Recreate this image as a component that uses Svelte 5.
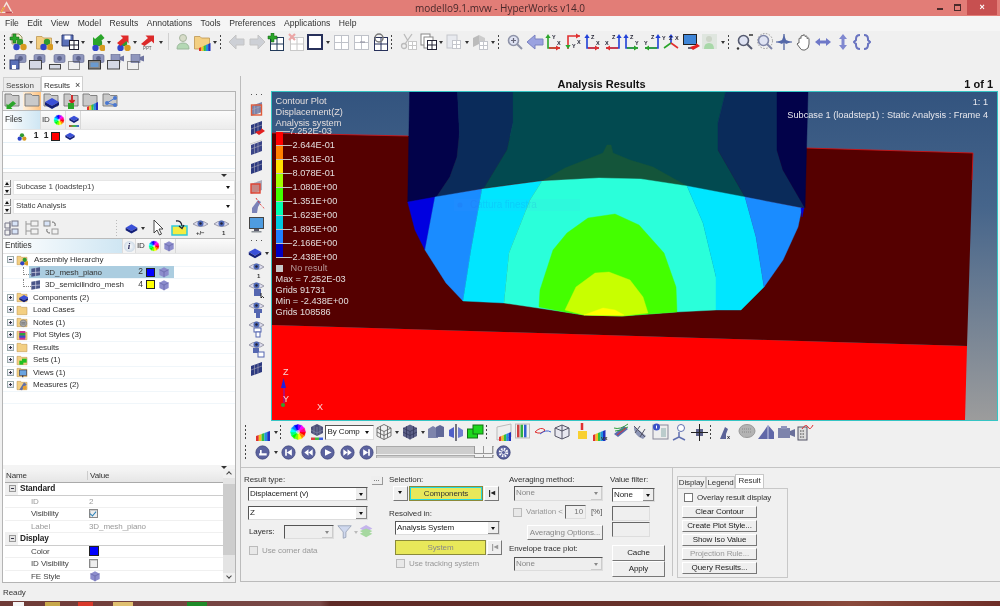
<script>
	const trio = (x = 0, y = 0) =>
		`<g transform="translate(${x} ${y})"><circle cx="9" cy="8" r="3.2" fill="#2f9a2f"/><circle cx="5.5" cy="13" r="3.2" fill="#2f45c8"/><circle cx="12.5" cy="13" r="3.2" fill="#d89a20"/></g>`;
	const cube = (x = 0, y = 0, c = "#3a50d8", d = "#131f78") =>
		`<g transform="translate(${x} ${y})"><path d="M9 4l7 4-7 4-7-4z" fill="${c}"/><path d="M2 8v3l7 4 7-4V8l-7 4z" fill="${d}"/></g>`;
	const folder = `<path d="M1.5 3.5h5.5l1.5 1.5h8v11h-15z" fill="#f3cf82" stroke="#bd9550" stroke-width=".8"/>`;
	const gfolder = `<path d="M2 2h6l1.5 1.5H16V14H2z" fill="#c9c9c9" stroke="#777" stroke-width=".9"/>`;
	const pane = (x, y, s = 9, c = "#223") =>
		`<g transform="translate(${x} ${y})" fill="none" stroke="${c}"><rect x=".5" y=".5" width="${s}" height="${s}" fill="#fff"/><path d="M${s / 2 + 0.5} .5V${s + 0.5}M.5 ${s / 2 + 0.5}H${s + 0.5}"/></g>`;
	const plus = (x, y, c = "#2aa52a") =>
		`<path transform="translate(${x} ${y})" d="M3 0h3v3h3v3H6v3H3V6H0V3h3z" fill="${c}" stroke="#175c17" stroke-width=".5"/>`;
	const rainbow = (x = 0, y = 0, w = 3) =>
		`<g transform="translate(${x} ${y})">` +
		["#e03030", "#f0c020", "#30c040", "#2090e0", "#2030c0"]
			.map((c, i) => `<path d="M${i * w} ${12 - i} l${w} -1 v11 l-${w} 1z" fill="${c}"/>`)
			.join("") +
		`</g>`;
	const wheel = () => {
		let s = "";
		for (let a = 0; a < 12; a++) {
			const p = (k) => `${9 + 7.5 * Math.cos((k * Math.PI) / 6)} ${9 + 7.5 * Math.sin((k * Math.PI) / 6)}`;
			s += `<path d="M9 9L${p(a)}L${p(a + 1)}z" fill="hsl(${a * 30} 100% 50%)" stroke="hsl(${a * 30} 100% 50%)" stroke-width=".4"/>`;
		}
		return s + `<circle cx="9" cy="9" r="2" fill="#fff" opacity=".6"/>`;
	};
	const axes = (a, b, ca, cb, flip) => {
		const x0 = flip ? 15 : 3;
		const x1 = flip ? 2 : 15;
		return `<path d="M${x0} 3V15H${x1}" fill="none" stroke="${ca}" stroke-width="1.6"/><path d="M${x0} 1l2.6 4h-5.2z" fill="${ca}"/><path d="M${x1} 15l${flip ? 4 : -4} -2.6v5.2z" fill="${cb}"/><path d="M${flip ? 14 : 4} 15H${x1}" stroke="${cb}" stroke-width="1.6"/><text x="${flip ? 8 : 7}" y="6" class="ax">${a}</text><text x="${flip ? 1 : 12}" y="12" class="ax">${b}</text>`;
	};
	const cam = (body) =>
		`<rect x="6" y="1.5" width="11" height="8" rx="1.5" fill="#8f96bd" stroke="#5d638c" stroke-width=".6"/><circle cx="11.5" cy="5.5" r="2.4" fill="#5d638c"/>${body}`;
	const mesh = (extra = "", c = "#2d3a80") =>
		`<path d="M3 7l11-4v10l-11 4z" fill="${c}"/><path d="M6.5 5.8v10M10 4.5v10M3 11l11-4" stroke="#aab" stroke-width=".6"/>${extra}`;
	const eye = (extra = "") =>
		`<path d="M1 5q7-6 15 0q-7 5-15 0z" fill="#dde" stroke="#889" stroke-width=".8"/><circle cx="8.5" cy="4.5" r="3" fill="#4f69b8"/><circle cx="8.5" cy="4.5" r="1.2" fill="#223"/>${extra}`;
	const glass = (c = "#99a") =>
		`<circle cx="7.5" cy="7.5" r="5" fill="#dfe3f3" stroke="${c}" stroke-width="1.6"/><path d="M11 11l5 5" stroke="${c}" stroke-width="2"/>`;
	const disc = (body) =>
		`<circle cx="9" cy="9" r="8" fill="#5c639f" stroke="#3d4478" stroke-width=".8"/><path d="${body}" fill="#fff"/>`;

	const I = {
		new: `<path d="M3 1h7l3 3v7H3z" fill="#f5f3d2" stroke="#99966a"/>${plus(1, 1)}${trio(2, 1)}`,
		open: `${folder}${trio(3, 1)}`,
		save: `<path d="M1 2h11v11H1z" fill="#5a70b8" stroke="#2f3b70"/><rect x="3.5" y="2.5" width="6" height="4" fill="#fff"/>${pane(8, 7)}`,
		imp: `${trio(3, 2)}<path d="M15 2l-6 5-2-2v8h8l-2.5-2 6-5z" fill="#2aa52a" transform="translate(-1 -1)"/>`,
		exp: `${trio(2, 2)}<path d="M4 10l6-5-2.5-2.5h8v8l-2-2.5-6 5z" fill="#e02a2a"/>`,
		ppt: `<path d="M2 11l7-6-2.5-2.5h8.500v8l-2.5-2.5-7 5z" fill="#dc2a2a"/><text x="4" y="17" class="tiny">PPT</text>`,
		person: `<circle cx="9" cy="5" r="3.5" fill="#d7dcc8" stroke="#a8b6a0"/><path d="M3 16q0-6 6-6t6 6z" fill="#b4d8b4" stroke="#9ab89a"/>`,
		fcolor: `${folder}${rainbow(6, 3, 2.3)}`,
		left: `<path d="M1 9l7-7v4h8v6H8v4z" fill="#cdd0d6" stroke="#c4c4c4"/>`,
		right: `<path d="M17 9l-7-7v4H2v6h8v4z" fill="#cdd0d6" stroke="#c4c4c4"/>`,
		back: `<path d="M1 9l8-7v4h8v6H9v4z" fill="#9aa2e0" stroke="#7a82c0"/>`,
		add: `${pane(3, 4, 13, "#223a5a")}${plus(1, 0)}`,
		del: `${pane(3, 4, 13, "#c8c8c8")}<path d="M2 1l6 6M8 1L2 7" stroke="#eba5a5" stroke-width="2.2"/>`,
		frame: `<rect x="2" y="2" width="14" height="14" fill="#fff" stroke="#27305a" stroke-width="2"/>`,
		pd1: pane(2, 2, 14, "#bfc2c9"),
		pd2: `${pane(2, 2, 14, "#bfc2c9")}<path d="M8 9h5" stroke="#889" />`,
		pd3: `${pane(3, 4, 13, "#27305a")}<circle cx="8" cy="5" r="4" fill="none" stroke="#777" stroke-width="1.5"/>`,
		cut: `<circle cx="4" cy="13" r="2.5" fill="none" stroke="#bbb" stroke-width="1.3"/><path d="M5 11l7-10M8 8l-4-7" stroke="#bbb" stroke-width="1.3"/>${pane(8, 8, 8, "#c8c8c8")}`,
		copy: `<rect x="2" y="1" width="9" height="11" fill="#fff" stroke="#888"/><rect x="5" y="4" width="9" height="11" fill="#fff" stroke="#888"/>${pane(8, 7, 9)}`,
		paste: `<rect x="2" y="2" width="10" height="13" fill="#e8eaef" stroke="#c4c6cc"/>${pane(7, 7, 8, "#c4c6cc")}`,
		paste2: `<path d="M2 5l6-3v9l-6 3z" fill="#bbb"/><path d="M8 2l6 3v9l-6-3z" fill="#ccc"/>${pane(8, 8, 8, "#c4c6cc")}`,
		zoom: `${glass("#8e93a8")}<path d="M5 7.5h5M7.5 5v5" stroke="#667" stroke-width="1.2"/>`,
		xy: axes("Y", "X", "#2aa52a", "#e03030"),
		yx: `<path d="M3 16V3H15" fill="none" stroke="#e03030" stroke-width="1.6"/><path d="M15 3l-4-2.6v5.200z" fill="#e03030"/><path d="M3 16l2.6-4h-5.2z" fill="#2aa52a"/><text x="7" y="15" class="ax">Y</text><text x="12" y="11" class="ax">X</text>`,
		zx: axes("Z", "X", "#2040d8", "#e03030"),
		xz: axes("Z", "X", "#2040d8", "#e03030", true),
		zy: axes("Z", "Y", "#2040d8", "#2aa52a"),
		yz: axes("Z", "Y", "#2040d8", "#2aa52a", true),
		iso: `<path d="M9 10V3" stroke="#2040d8" stroke-width="1.6"/><path d="M9 10l-7 5" stroke="#2aa52a" stroke-width="1.6"/><path d="M9 10l7 5" stroke="#e03030" stroke-width="1.6"/><path d="M9 1l2.5 3.5h-5z" fill="#2040d8"/><text x="7" y="6.5" class="ax">Z</text><text x="0" y="7" class="ax">Y</text><text x="13" y="7" class="ax">X</text>`,
		screen: `<rect x="1.5" y="1.5" width="13" height="10" fill="#3f86d8" stroke="#222"/><path d="M6 15h6" stroke="#667" stroke-width="2"/><path d="M8 14l6-2v-2l4 3-7 4z" fill="#e22020"/>`,
		persond: `<rect x="1" y="1" width="15" height="15" fill="#dfe6df"/><circle cx="8" cy="6" r="3" fill="#cdd5c8"/><path d="M3 16q0-6 5-6t5 6z" fill="#a8d8a8"/>`,
		zoomo: `${glass("#555a70")}<path d="M13 2h4" stroke="#333" stroke-width="1.5"/><circle cx="2" cy="15.5" r="1.2" fill="#333"/>`,
		zoomb: `<circle cx="9" cy="8" r="7.5" fill="none" stroke="#999" stroke-dasharray="1.5 1.5"/>${glass("#7f86a8")}`,
		cross: `<path d="M9 1v16M1 9h16" stroke="#465a9a" stroke-width="1.2"/><path d="M9 2l2 5-2 2-2-2zM2 9l5-2 2 2-2 2zM16 9l-5-2-2 2 2 2z" fill="#5468a8"/>`,
		hand: `<path d="M4 10V5.5q1.5-1 2 0V3q1.5-1 2 0v-1q1.5-.5 2 .5v1q1.5-1 2 0v2q1.5-1 2 0V11q0 5-4 6H8q-2 0-3-2L2 11q1-1.5 2-1z" fill="#fff" stroke="#555" stroke-width=".9"/>`,
		lr: `<path d="M1 9l5-4v2.5h6V5l5 4-5 4v-2.5H6V13z" fill="#6e78c8"/>`,
		ud: `<path d="M9 1l4 5h-2.5v6H13l-4 5-4-5h2.5V6H5z" fill="#8088d0"/>`,
		brace: `<path d="M7 2Q3 2 3 6v1l-2 2 2 2v1q0 4 4 4M11 2q4 0 4 4v1l2 2-2 2v1q0 4-4 4" fill="none" stroke="#6a74c0" stroke-width="2"/>`,
		cam1: cam(`<rect x="1" y="7" width="9" height="9" fill="#5a70b8" stroke="#2f3b70"/><rect x="3" y="12" width="4" height="4" fill="#fff"/>`),
		cam2: cam(`<rect x="1.5" y="7.5" width="12" height="8.5" fill="#d4d8e4" stroke="#444"/>`),
		cam3: cam(`<rect x="1.5" y="11.5" width="11" height="4.5" fill="#d4d8e4" stroke="#444"/>`),
		cam4: cam(`<rect x="1.5" y="8.5" width="11" height="8" fill="none" stroke="#333" stroke-dasharray="1 1"/>`),
		cam5: cam(`<rect x="1.5" y="7.5" width="12" height="8.5" fill="#888" stroke="#333"/><rect x="3.5" y="9.5" width="8" height="4.5" fill="#6a9ad0"/>`),
		vid1: `<rect x="5" y="1.5" width="9" height="8" fill="#8f96bd" stroke="#5d638c" stroke-width=".6"/><path d="M14 4l4-1.5v6L14 7z" fill="#6e74a0"/><rect x="1.5" y="7.5" width="12" height="8.5" fill="#d4d8e4" stroke="#444"/>`,
		vid2: `<rect x="5" y="1.5" width="9" height="8" fill="#8f96bd" stroke="#5d638c" stroke-width=".6"/><path d="M14 4l4-1.5v6L14 7z" fill="#6e74a0"/><rect x="1.5" y="8.5" width="11" height="8" fill="none" stroke="#333" stroke-dasharray="1 1"/>`,
		pf1: `${gfolder}<path d="M14 9l-5 4-1.5-1.5v5.5h6l-1.5-1.5 5-4z" fill="#2aa52a" transform="translate(-4 0)"/>`,
		pf2: gfolder,
		pf3: `${gfolder}${cube(1, 2)}`,
		pf4: `${gfolder}<path d="M10 3v7M7.5 8l2.5 3 2.5-3" stroke="#d02020" stroke-width="1.8" fill="none"/><rect x="6" y="11" width="6" height="6" fill="#2aa52a"/>`,
		pf5: `${gfolder}${rainbow(6, 3, 2.2)}`,
		pf6: `${gfolder}<circle cx="6" cy="11" r="2" fill="#4a78d0"/><circle cx="14" cy="6" r="2" fill="#4a78d0"/><circle cx="14" cy="13" r="2" fill="#4a78d0"/><path d="M6 11l8-5M6 11l8 2" stroke="#4a78d0"/>`,
		cube: cube(),
		grayc: `<path d="M9 2l7 3.5v8L9 17l-7-3.5v-8z" fill="#8c8ccc"/><path d="M2 5.5L9 9l7-3.5M9 9v8" stroke="#6262a4" fill="none"/>`,
		sel1: `<path d="M2 4h5v5H2zM2 11h5v5H2zM7 2v14" fill="none" stroke="#778"/><rect x="9" y="2" width="6" height="5" fill="#d8e4f8" stroke="#778"/><rect x="9" y="10" width="6" height="5" fill="#d8e4f8" stroke="#778"/>`,
		sel2: `<path d="M2 2v14M2 5h5M2 12h5" fill="none" stroke="#999"/><rect x="7" y="2" width="7" height="5" fill="#f2f2f2" stroke="#999"/><rect x="7" y="10" width="7" height="5" fill="#f2f2f2" stroke="#999"/>`,
		sel3: `<rect x="2" y="2" width="6" height="5" fill="#d8e4f8" stroke="#888"/><rect x="10" y="10" width="6" height="5" fill="#f2f2f2" stroke="#999"/><path d="M10 3q4 0 3 4M8 14q-4 0-3-4" fill="none" stroke="#666"/>`,
		cursor: `<path d="M4 1v13l3-3 2.5 5 2-1-2.5-5h4z" fill="#fff" stroke="#333" stroke-width=".9"/>`,
		ybox: `<rect x="1" y="7" width="15" height="9" fill="#f4ec40" stroke="#30c8d8" stroke-width="1.5"/><path d="M5 2q5-1 6 5M8 7l3 2.5L13 6" fill="none" stroke="#223" stroke-width="1.3"/>`,
		eyepm: eye(`<text x="4" y="16" class="tinyb">+/−</text>`),
		eye1: eye(`<text x="9" y="16" class="tinyb">1</text>`),
		eye2: eye(`<rect x="6" y="8" width="7" height="7" fill="#5466b0"/><path d="M13 12v5l1.5-1.5L16 17" stroke="#222" fill="none"/>`),
		eye3: eye(`<rect x="6" y="8" width="8" height="4" fill="#5466b0"/><rect x="8" y="12" width="4" height="5" fill="#5466b0"/>`),
		eye4: eye(`<rect x="6" y="8" width="7" height="4" fill="#fff" stroke="#5466b0"/><rect x="8" y="12" width="4" height="5" fill="#fff" stroke="#5466b0"/>`),
		eye5: eye(`<rect x="5" y="8" width="6" height="5" fill="#5466b0"/><rect x="10" y="12" width="6" height="5" fill="#fff" stroke="#5466b0"/>`),
		msh1: mesh(`<rect x="3.5" y="6" width="10" height="10" fill="none" stroke="#e05a3a" stroke-width="1.4"/>`, "#7c84ac"),
		msh2: mesh(`<path d="M7 14l6-2v-2l4 3-6 4z" fill="#e22020"/>`),
		msh3: mesh(`<path d="M2 6l12-4" stroke="#ccc"/>`, "#3a4488"),
		msh4: mesh(),
		msh5: mesh(`<rect x="3" y="7" width="9" height="9" fill="#d87060" fill-opacity=".6" stroke="#e04030" stroke-width="1.4"/>`, "#aab"),
		scurve: `<path d="M4 17v-5l6-8 3 2-3 5-1 6z" fill="#7a82b8"/><path d="M8 2q5 8 9 11" stroke="#e03030" fill="none" stroke-dasharray="2 1.5"/>`,
		pc: `<rect x="1.5" y="1.5" width="14" height="11" fill="#4f9ce0" stroke="#444"/><rect x="6" y="13" width="5" height="2" fill="#556"/><rect x="3.5" y="15" width="10" height="1.5" fill="#8a9096"/>`,
		colorp: `${rainbow(2, 1, 2.8)}`,
		wheel: wheel(),
		cubestack: `<path d="M9 1l6 3v6l-6 3-6-3V4z" fill="#4c5078"/><path d="M3 7l6 3 6-3M9 4v9M6 2.5v9M12 2.5v9" stroke="#8a8eae" fill="none" stroke-width=".6"/><rect x="3" y="14.5" width="4" height="2.5" fill="#e04040"/><rect x="7" y="14.5" width="4" height="2.5" fill="#40c040"/><rect x="11" y="14.5" width="4" height="2.5" fill="#4060e0"/>`,
		wire: `<path d="M9 1.5l7 3.5v8l-7 3.5-7-3.5V5zM2 5l7 3.5L16 5M9 8.5v8M5.5 3.200v11.500M12.5 3.200v11.500M2 9l7 3.5L16 9" fill="none" stroke="#555" stroke-width=".8"/>`,
		solid: `<path d="M9 1.5l7 3.5v8l-7 3.5-7-3.5V5z" fill="#5c6088"/><path d="M2 5l7 3.5L16 5M9 8.5v8M5.5 3.200v11.500M12.5 3.200v11.500M2 9l7 3.5L16 9" fill="none" stroke="#33375c" stroke-width=".8"/>`,
		bricks: `<path d="M1 6l5-3 5 3v9H1z" fill="#7d84ac"/><path d="M9 4l4-2 4 2v10H9z" fill="#606898" />`,
		mirror: `<path d="M7 4v11L2 13V7z" fill="#5060c8"/><path d="M11 4v11l5-2V7z" fill="#5060c8" fill-opacity=".8"/><path d="M9 1v17" stroke="#223" stroke-width="1.2"/>`,
		greens: `<rect x="1.5" y="6" width="10" height="9" fill="#1ed81e" stroke="#127012"/><rect x="7" y="2" width="10" height="9" fill="#1ed81e" stroke="#127012"/>`,
		legend1: `<path d="M2 4l14-3v13L2 17z" fill="#eee" stroke="#bbb"/>${rainbow(4, 2, 2.4)}`,
		legend2: `<rect x="3" y="1.5" width="2.5" height="13" fill="#d04040"/><rect x="6.5" y="1.5" width="2.5" height="13" fill="#30b040"/><rect x="10" y="1.5" width="2.5" height="13" fill="#3060d0"/><rect x="1.5" y="1" width="14" height="14" fill="none" stroke="#bbb"/>`,
		eyeflow: `<path d="M1 9q6-6 10-2-4 5-10 2z" fill="none" stroke="#e03030"/><path d="M6 11q6-5 11-2" stroke="#4060d0" fill="none"/>`,
		meshc: `<path d="M2 5l7-3 7 3v8l-7 3-7-3z" fill="#e8e8f0" stroke="#556" /><path d="M9 2v14M2 5l7 3 7-3" stroke="#556" fill="none"/>`,
		yhand: `<path d="M5 8h9v8H5z" fill="#f8d030"/><path d="M9 0v7" stroke="#e03030" stroke-width="2.5"/>`,
		lx: `${rainbow(1, 0, 2.5)}<text x="9" y="17" class="tinyb">vx</text>`,
		stack: `<path d="M2 11l10-8 4 3-10 8z" fill="#5a6ab0"/><path d="M2 5q6 2 14-4M3 8q6 0 13-4" fill="none" stroke="#30a040"/><path d="M5 12l9-7" stroke="#e03030"/>`,
		dish: `<path d="M3 3q-1 9 9 13l3-3z" fill="#8c94b4"/><path d="M3 3l11 11M4 10l5-7M9 14l5-8" stroke="#556"/>`,
		info: `<rect x="2" y="2" width="15" height="14" fill="#eee" stroke="#889"/><rect x="10" y="5" width="5" height="9" fill="#bcc"/><circle cx="5.5" cy="4" r="3.5" fill="#3a50c8"/><rect x="5" y="2.5" width="1" height="3" fill="#fff"/>`,
		query: `<path d="M9 9v5l-6 3M9 14l6 3" stroke="#6070b0" fill="none" stroke-width="1.5"/><circle cx="11" cy="5" r="3.5" fill="#fff" stroke="#6070b0"/>`,
		move: `<rect x="6" y="6" width="7" height="7" fill="#5c6088"/><path d="M9.5 1v17M1 9.5h17" stroke="#222" stroke-width="1"/>`,
		resx: `<path d="M2 16l5-12 3 2-2 5v5z" fill="#5b6398"/><text x="9" y="16" class="ax">x</text>`,
		chat: `<ellipse cx="9" cy="8" rx="8" ry="6.5" fill="#b3b3b3" stroke="#999"/><path d="M5 15l1-3h3z" fill="#b3b3b3"/><path d="M4 6h10M4 9h10" stroke="#888" stroke-dasharray="1 1"/>`,
		ramp: `<path d="M1 16l6-8 4-6 6 7v7z" fill="#6068a8"/><path d="M11 2v14" stroke="#c8cce8"/>`,
		camv: `<rect x="1" y="5" width="12" height="10" fill="#7d84ac"/><path d="M13 8l5-2v8l-5-2z" fill="#6a709a"/><rect x="4" y="3" width="6" height="3" fill="#9096bc"/>`,
		chart: `<rect x="2" y="4" width="9" height="13" fill="#ddd" stroke="#556"/><path d="M4 8h5M4 11h5M4 14h5" stroke="#444" stroke-dasharray="1.5 1"/><path d="M6 6q4-6 6-2t5-2" stroke="#e03030" fill="none"/>`,
		funnel: `<path d="M1 2h15l-6 7v6l-3 1V9z" fill="#cfd8ee" stroke="#99a4b8"/>`,
		layer: `<path d="M8 1l7 4-7 4-7-4z" fill="#c4b4ec"/><path d="M1 8l7 4 7-4-7-3z" fill="#a6d8a0"/><path d="M1 11l7 4 7-4-7-3z" fill="#a6d8a0"/>`,
		play: disc("M6 5l8 4-8 4z"),
		first: disc("M5 5h2v8H5zM13 5v8L7 9z"),
		prev: disc("M9 5v8L4 9zM14 5v8L9 9z"),
		next: disc("M4 5v8l5-4zM9 5v8l5-4z"),
		last: disc("M5 5v8l6-4zM11 5h2v8h-2z"),
		timeb: disc("M5 10h9v2.5H5zM6 6h2v4H6z"),
		gear: `<circle cx="9" cy="9" r="8" fill="#5c639f" stroke="#3d4478"/><circle cx="9" cy="9" r="4.5" fill="none" stroke="#fff" stroke-width="2.4" stroke-dasharray="2 1.5"/><circle cx="9" cy="9" r="2.5" fill="none" stroke="#fff"/>`,
		cub3: trio(0, 0),
		gnotes: `${folder}<circle cx="11" cy="11" r="5" fill="#aaa" stroke="#777"/><path d="M8 10h6M8 12h6" stroke="#666"/>`,
		gplot: `${folder}<rect x="5" y="3" width="9" height="13" fill="#d03090"/><rect x="5" y="6" width="9" height="4" fill="#30a040"/><rect x="5" y="10" width="9" height="3" fill="#3050d0"/>`,
		gsets: `${folder}<rect x="5" y="10" width="6" height="6" fill="#22c022"/><rect x="9" y="7" width="7" height="6" fill="#22c022"/>`,
		gviews: `${folder}<rect x="5" y="6" width="11" height="8" fill="#6aa4e0" stroke="#445"/><path d="M10 14v3" stroke="#445" stroke-width="2"/>`,
		gmeas: `${folder}<path d="M5 16l7-11 4 3-7 9z" fill="#6070a8"/><circle cx="13" cy="13" r="3" fill="#e8a030"/>`,
		gcomp: `${folder}${cube(3, 2)}`,
		gasm: `${folder}${trio(4, 1)}`,
		meshicon: `<path d="M2 4l13-2v12L2 16z" fill="#4b5688"/><path d="M8.5 3v12M2 10l13-1" stroke="#dde" stroke-width="1"/>`,
		folder
	};

	const t1 = [
		"grip", ["new", 1], ["open", 1], ["save", 1], ["imp", 1], ["exp", 1], ["ppt", 1], "sep",
		["person"], ["fcolor", 1], "grip", ["left"], ["right"], ["add"], ["del"], ["frame", 1],
		["pd1"], ["pd2"], ["pd3"], "grip", ["cut"], ["copy", 1], ["paste", 1], ["paste2", 1], "grip",
		["zoom"], ["back"], ["xy"], ["yx"], ["zx"], ["xz"], ["zy"], ["yz"], ["iso"], ["screen"],
		["persond", 1], "grip", ["zoomo"], ["zoomb"], ["cross"], ["hand"], ["lr"], ["ud"], ["brace"]
	];
	const t2 = ["grip", ["cam1"], ["cam2"], ["cam3"], ["cam4"], ["cam5"], ["vid1"], ["vid2"]];
	const r1a = ["grip", ["colorp", 1], "grip"];
	const r1b = [["wire", 1], ["solid", 1], ["bricks"], ["mirror"], ["greens"], "grip", ["legend1"], ["legend2"], ["eyeflow"], ["meshc"], ["yhand"], ["lx"], ["stack"], ["dish"], ["info"], ["query"], ["move"], "grip", ["resx"], ["chat"], ["ramp"], ["camv"], ["chart"]];
	const vt1 = ["msh1", "msh2", "msh3", "msh4", "msh5", "scurve", "pc"];
	const vt2 = ["eye1", "eye2", "eye3", "eye4", "eye5", "msh4"];
	const menu = ["File", "Edit", "View", "Model", "Results", "Annotations", "Tools", "Preferences", "Applications", "Help"];
	const nodes = [
		["gcomp", "Components (2)"], ["folder", "Load Cases"], ["gnotes", "Notes (1)"], ["gplot", "Plot Styles (3)"],
		["folder", "Results"], ["gsets", "Sets  (1)"], ["gviews", "Views (1)"], ["gmeas", "Measures (2)"]
	];

	const bands = [
		["#02024a", "409.6,92 457.5,92 459.4,133 457,157 449.8,177 436.4,197 407.7,202"],
		["#0a2b5a", "457.5,92 513,92 513,123 507,150 484,188 436.4,197 449.8,177 457,157 459.4,133"],
		["#024a50", "513,92 725.7,92 718,123 718,150 745,197 687,186 641,179 599,178 544,180 484,188 507,150 513,123"],
		["#14553a", "544,180 565,168 603,153 607,145 611,145 613,153 630,160 653,167 687,186 641,179 599,178"],
		["#0a2b5a", "725.7,92 777,92 777,150 783,170 805,208 745,197 718,150 718,123"],
		["#02024a", "777,92 808,92 805,208 783,170 777,150"],
		["#0000e0", "407.7,202 435,197 425,250 415,230"],
		["#1a8cff", "435,197 482,189 471,250 463,301 446,283 425,250"],
		["#00e6ff", "482,189 542,181 530,200 509,253 504,303 463,301 471,250"],
		["#2affda", "542,181 599,178 641,179 687,186 703,223 716,277 716,310 676,312 622,316 584,315 565,312 504,303 509,253 530,200"],
		["#00e6ff", "687,186 745,197 756,237 764,287 741,310 716,310 716,277 703,223"],
		["#1a8cff", "745,197 802,208 798,227 783,260 764,287 756,237"],
		["#0000e0", "801,208 804,208 802,217"],
		["#44ff00", "588,218 615,214 639,225 664,253 676,287 677,312 622,316 584,315 565,312 539,307 540,290 553,250 567,233"],
		["#c8ff00", "565,310 576,287 595,273 609,272 630,280 643,297 648,313 622,316 584,315"],
		["#ffff00", "584,315 603,308 615,310 624,315"]
	];
	const scale = ["7.252E-03", "-2.644E-01", "-5.361E-01", "-8.078E-01", "-1.080E+00", "-1.351E+00", "-1.623E+00", "-1.895E+00", "-2.166E+00", "-2.438E+00"];
	const scaleColors = ["#ff0000", "#ff8000", "#ffe000", "#a0ff00", "#40ff00", "#00ffb0", "#00c8e0", "#2080ff", "#0000c0"];

	const props = [
		["sec", "Standard"], ["ID", "2", "dim"], ["Visibility", "check"], ["Label", "3D_mesh_piano", "dim"],
		["sec", "Display"], ["Color", "color"], ["ID Visibility", "box"], ["FE Style", "fe"]
	];
	const task = [
		[13, 11, "#f4f4f4"], [45, 15, "#c8a84a"], [78, 15, "#d9382a"], [113, 20, "#e0c070"], [187, 20, "#1e8a28"]
	];
</script>

{#snippet ic(name, cls = "")}
	<svg class="ic {cls}" viewBox="0 0 18 18" aria-hidden="true">{@html I[name]}</svg>
{/snippet}

{#snippet bar(items)}
	{#each items as it}
		{#if it === "grip"}
			<span class="grip"></span>
		{:else if it === "sep"}
			<span class="sep"></span>
		{:else}
			<span class="btn">{@render ic(it[0])}</span>
			{#if it[1]}<span class="drop"></span>{/if}
		{/if}
	{/each}
{/snippet}

{#snippet combo(text, cls = "")}
	<div class="combo {cls}"><span>{text}</span><b></b></div>
{/snippet}

{#snippet check(text, cls = "")}
	<div class="chk {cls}"><i></i><span>{text}</span></div>
{/snippet}

<div class="app">
	<header class="title">
		<svg class="logo" viewBox="0 0 12 12" aria-hidden="true">
			<path d="M6 1.5L11 10.5H1z" fill="none" stroke="#f4e8e0" stroke-width="1.3" />
			<path d="M1 10.5L4 5.5" stroke="#e8a040" stroke-width="1.5" />
			<path d="M5 10.5H11" stroke="#c04a50" stroke-width="1.5" />
		</svg>
		<span class="win-title">modello9.1.mvw - HyperWorks v14.0</span>
		<div class="win-ctl">
			<span class="min"></span>
			<span class="max"></span>
			<span class="close">×</span>
		</div>
	</header>

	<nav class="menu">
		{#each menu as m}<span>{m}</span>{/each}
	</nav>

	<div class="tools">
		<div class="row">{@render bar(t1)}</div>
		<div class="row">{@render bar(t2)}</div>
	</div>

	<main class="main">
		<aside class="left">
			<div class="tabs">
				<span class="tab">Session</span>
				<span class="tab on">Results <em>×</em></span>
			</div>
			<div class="lbox">
				<div class="ltools">
					{@render ic("pf1")}
					<span class="hot">{@render ic("pf2")}</span>
					{@render ic("pf3")}
					{@render ic("pf4")}
					{@render ic("pf5")}
					{@render ic("pf6")}
				</div>
				<div class="thead files">
					<span class="th blue">Files</span>
					<span class="th id">ID</span>
					<span class="th sq">{@render ic("wheel", "s12")}</span>
					<span class="th sq2">{@render ic("cube", "s12")}<u class="rb"></u></span>
				</div>
				<div class="ftable">
					<div class="frow">
						{@render ic("cub3", "s12")}
						<b>1</b><b>1</b>
						<i class="sw" style="background:#f00"></i>
						{@render ic("cube", "s12")}
					</div>
					<div class="frow"></div>
					<div class="frow"></div>
				</div>
				<div class="split"><span class="tri"></span></div>
				<div class="scombo">
					<div class="spin"><s></s><s class="d"></s></div>
					{@render combo("Subcase 1 (loadstep1)", "wide")}
				</div>
				<div class="scombo">
					<div class="spin"><s></s><s class="d"></s></div>
					{@render combo("Static Analysis", "wide")}
				</div>
				<div class="eicons">
					{@render ic("sel1")}
					{@render ic("sel2")}
					{@render ic("sel3")}
					<span class="vdots"></span>
					{@render ic("cube", "s14")}<span class="drop"></span>
					{@render ic("cursor")}
					{@render ic("ybox")}
					{@render ic("eyepm")}
					{@render ic("eye1")}
				</div>
				<div class="thead ents">
					<span class="th blue">Entities</span>
					<span class="th inf"><i>i</i></span>
					<span class="th id">ID</span>
					<span class="th sq">{@render ic("wheel", "s12")}</span>
					<span class="th sq2">{@render ic("grayc", "s12")}</span>
				</div>
				<div class="tree">
					<div class="trow">
						<span class="pm minus"></span>{@render ic("gasm", "s12")}
						<span class="tl ah">Assembly Hierarchy</span>
					</div>
					<div class="trow child">
						<span class="hl">
							{@render ic("meshicon", "s12")}
							<span class="tl">3D_mesh_piano</span>
							<b>2</b><i class="sw" style="background:#00f"></i>{@render ic("grayc", "s12")}
						</span>
					</div>
					<div class="trow child last">
						<span class="hl off">
							{@render ic("meshicon", "s12")}
							<span class="tl">3D_semicilindro_mesh</span>
							<b>4</b><i class="sw" style="background:#ff0"></i>{@render ic("grayc", "s12")}
						</span>
					</div>
					{#each nodes as n}
						<div class="trow">
							<span class="pm"></span>{@render ic(n[0], "s12")}
							<span class="tl">{n[1]}</span>
						</div>
					{/each}
					<div class="trow"></div>
				</div>
				<div class="split two"><span class="tri"></span></div>
				<div class="ptable">
					<div class="pmain">
						<div class="phead"><span>Name</span><span>Value</span></div>
						{#each props as p}
							{#if p[0] === "sec"}
								<div class="psec"><span class="pm minus gray"></span><b>{p[1]}</b></div>
							{:else}
								<div class="prow">
									<span class:dim={p[2] === "dim"}>{p[0]}</span>
									<span class="val" class:dim={p[2] === "dim"}>
										{#if p[1] === "check"}
											<i class="cb on"></i>
										{:else if p[1] === "box"}
											<i class="cb"></i>
										{:else if p[1] === "color"}
											<i class="colr"></i>
										{:else if p[1] === "fe"}
											{@render ic("grayc", "s12")}
										{:else}
											{p[1]}
										{/if}
									</span>
								</div>
							{/if}
						{/each}
					</div>
					<div class="vscroll"><span class="up"></span><span class="thumb"></span><span class="dn"></span></div>
				</div>
			</div>
		</aside>

		<section class="right">
			<div class="caption">
				<span class="cap-title">Analysis Results</span>
				<span class="cap-page">1 of 1</span>
			</div>
			<div class="view">
				<div class="vtools">
					<span class="hdots"></span>
					{#each vt1 as n}<span class="vbtn">{@render ic(n)}</span>{/each}
					<span class="hdots"></span>
					<span class="vbtn cubeb">{@render ic("cube", "s16")}<span class="drop"></span></span>
					{#each vt2 as n}<span class="vbtn">{@render ic(n)}</span>{/each}
				</div>
				<div class="plot">
					<svg class="canvas" viewBox="272 92 725 328" aria-hidden="true">
						<defs>
							<linearGradient id="sky" x1="0" y1="0" x2="0" y2="1">
								<stop offset="0" stop-color="#33547f" />
								<stop offset=".35" stop-color="#46658b" />
								<stop offset="1" stop-color="#9c9c9c" />
							</linearGradient>
						</defs>
						<rect x="272" y="92" width="725" height="328" fill="url(#sky)" />
						<path d="M272 325L967 346 965 420H272z" fill="#ff0000" />
						<path d="M400 136H806L806 148 973 153 967 346 272 325 272 133z" fill="#550000" />
						<path d="M272 133L408 136M806 148L973 153 972 180" stroke="#e01010" fill="none" stroke-width=".8" />
						{#each bands as b}
							<polygon points={b[1]} fill={b[0]} stroke={b[0]} stroke-width=".4" />
						{/each}
						<rect x="454" y="199" width="126" height="12" fill="#60a0ff" opacity=".06" />
						<circle cx="460" cy="205" r="2.5" fill="#2060e0" opacity=".15" />
						<text x="470" y="208" class="ghost">Cattura finestra</text>
						<path d="M284 403V383" stroke="#a01090" stroke-width="1.5" />
						<path d="M283.5 378l2.5 10h-5z" fill="#2020e0" />
						<circle cx="283" cy="405" r="2" fill="#30a030" />
						<text x="283" y="375" class="axis">Z</text>
						<text x="283" y="402" class="axis">Y</text>
						<text x="317" y="410" class="axis">X</text>
					</svg>
					<div class="legend">
						<div>Contour Plot</div>
						<div>Displacement(Z)</div>
						<div>Analysis system</div>
						<div class="scale">
							<div class="bars">
								{#each scaleColors as c}<i style="background:{c}"></i>{/each}
							</div>
							<div class="labels">
								{#each scale as s}<div><i></i>{s}</div>{/each}
							</div>
						</div>
						<div class="nores"><i></i>No result</div>
						<div>Max = 7.252E-03</div>
						<div>Grids 91731</div>
						<div>Min = -2.438E+00</div>
						<div>Grids 108586</div>
					</div>
					<div class="frame-info">
						<div>1: 1</div>
						<div>Subcase 1 (loadstep1) : Static Analysis : Frame 4</div>
					</div>
				</div>
			</div>
			<div class="btools">
				<div class="row">
					{@render bar(r1a)}
					<span class="btn">{@render ic("wheel")}</span>
					<span class="btn">{@render ic("cubestack")}</span>
					<div class="combo comp"><span>By Comp</span><b class="flat"></b></div>
					{@render bar(r1b)}
				</div>
				<div class="row r2">
					<span class="grip"></span>
					<span class="btn">{@render ic("timeb")}</span><span class="drop"></span>
					<span class="btn">{@render ic("first")}</span>
					<span class="btn">{@render ic("prev")}</span>
					<span class="btn">{@render ic("play")}</span>
					<span class="btn">{@render ic("next")}</span>
					<span class="btn">{@render ic("last")}</span>
					<div class="slider">
						<div class="tr a"><i></i><i></i></div>
						<div class="tr b"><i></i><i></i></div>
					</div>
					<span class="btn">{@render ic("gear")}</span>
				</div>
			</div>
			<div class="panel">
				<div class="col c1">
					<div class="lbl">Result type: <span class="dots">...</span></div>
					{@render combo("Displacement (v)")}
					{@render combo("Z")}
					<div class="lay">
						<span>Layers:</span>
						{@render combo("", "off")}
						{@render ic("funnel", "s16")}
						<span class="drop light"></span>
						{@render ic("layer", "s16")}
					</div>
					{@render check("Use corner data", "off")}
				</div>
				<div class="col c2">
					<div class="lbl">Selection:</div>
					<div class="selrow">
						<span class="bev arrow"><s class="d"></s></span>
						<span class="ybtn act">Components</span>
						<span class="bev sk">|◂</span>
					</div>
					<div class="lbl res">Resolved in:</div>
					{@render combo("Analysis System")}
					<div class="selrow sys">
						<span class="ybtn">System</span>
						<span class="bev sk dis">|◂</span>
					</div>
					{@render check("Use tracking system", "off")}
				</div>
				<div class="col c3">
					<div class="lbl">Averaging method:</div>
					{@render combo("None", "off")}
					<div class="var">
						<div class="chk off"><i></i><span>Variation &lt;</span></div>
						<span class="inp num">10</span>
						<span>[%]</span>
					</div>
					<span class="bev opt">Averaging Options...</span>
					<div class="lbl env">Envelope trace plot:</div>
					{@render combo("None", "off")}
				</div>
				<div class="col c4">
					<div class="lbl">Value filter:</div>
					{@render combo("None")}
					<span class="inp"></span>
					<span class="inp"></span>
					<span class="bev act1">Cache</span>
					<span class="bev">Apply</span>
				</div>
				<div class="col c5">
					<div class="tabs2">
						<span>Display</span><span>Legend</span><span class="on">Result</span>
					</div>
					<div class="tbox">
						<div class="chk"><i></i><span>Overlay result display</span></div>
						<span class="bev">Clear Contour</span>
						<span class="bev">Create Plot Style...</span>
						<span class="bev">Show Iso Value</span>
						<span class="bev dis">Projection Rule...</span>
						<span class="bev">Query Results...</span>
					</div>
				</div>
			</div>
		</section>
	</main>

	<footer class="status">Ready</footer>
	<div class="taskbar">
		{#each task as t}<i style="left:{t[0]}px;width:{t[1]}px;background:{t[2]}"></i>{/each}
	</div>
</div>

<style>
	:global(body) {
		margin: 0;
		background: #f0f0f0;
	}

	.app {
		width: 1000px;
		height: 606px;
		overflow: hidden;
		display: flex;
		flex-direction: column;
		background: #f0f0f0;
		color: #222;
		font: 8px/1.15 "Liberation Sans", Arial, sans-serif;
		letter-spacing: -0.1px;
		filter: blur(0.35px);
	}

	.ic {
		width: 18px;
		height: 18px;
		display: block;
		flex: none;
	}
	.s12 {
		width: 12px;
		height: 12px;
	}
	.s14 {
		width: 15px;
		height: 15px;
	}
	.s16 {
		width: 16px;
		height: 16px;
	}
	.ic :global(.ax) {
		font: bold 5.5px "Liberation Sans", sans-serif;
		fill: #223;
	}
	.ic :global(.tiny) {
		font: 4.5px "Liberation Sans", sans-serif;
		fill: #555;
	}
	.ic :global(.tinyb) {
		font: bold 6px "Liberation Sans", sans-serif;
		fill: #333;
	}

	/* window chrome */
	.title {
		height: 16px;
		flex: none;
		background: #e27d77;
		position: relative;
		display: flex;
		align-items: center;
		justify-content: center;
	}
	.logo {
		position: absolute;
		left: 0;
		top: 1px;
		width: 13px;
		height: 13px;
	}
	.win-title {
		font: 10px "Open Sans", sans-serif;
		letter-spacing: 0;
		color: #48282a;
	}
	.win-ctl {
		position: absolute;
		right: 3px;
		top: 0;
		height: 15px;
		display: flex;
		align-items: stretch;
	}
	.win-ctl span {
		display: block;
	}
	.min {
		width: 6px;
		height: 2px;
		margin: 8px 11px 0 0;
		background: #4a2a2a;
	}
	.max {
		width: 5px;
		height: 4px;
		margin: 4px 6px 0 0;
		border: 1px solid #4a2a2a;
		border-top-width: 2px;
	}
	.close {
		width: 30px;
		background: #c75050;
		color: #fff;
		text-align: center;
		font: bold 9px/14px "Liberation Sans", sans-serif;
	}
	.menu {
		height: 15px;
		flex: none;
		box-sizing: border-box;
		background: #f5f5f5;
		display: flex;
		align-items: center;
		gap: 8.5px;
		padding-left: 5px;
		font-size: 8.6px;
		letter-spacing: 0;
		color: #333;
	}

	/* toolbars */
	.tools {
		height: 45px;
		flex: none;
		padding: 0 0 0 3px;
		box-sizing: border-box;
	}
	.row {
		display: flex;
		align-items: center;
		height: 20px;
		margin-top: 0.5px;
	}
	.btn {
		width: 19.5px;
		height: 18px;
		display: flex;
		justify-content: center;
		flex: none;
	}
	.drop {
		width: 6.5px;
		flex: none;
		height: 4px;
		position: relative;
		display: block;
	}
	.drop::after {
		content: "";
		position: absolute;
		left: 1px;
		top: 1px;
		border: 2.5px solid transparent;
		border-top: 3px solid #333;
		border-bottom: 0;
	}
	.drop.light::after {
		border-top-color: #bbb;
	}
	.grip {
		width: 9px;
		height: 16px;
		flex: none;
		background: radial-gradient(circle at center, #444 0.9px, transparent 1.1px) 0 0 / 3px 4px repeat-y;
	}
	.tools .row .grip:first-child {
		width: 5px;
	}
	.sep {
		width: 1px;
		height: 17px;
		background: #d0d0d0;
		margin: 0 4px 0 4px;
		flex: none;
	}

	.main {
		flex: 1;
		display: flex;
		min-height: 0;
	}

	/* left column */
	.left {
		width: 241px;
		flex: none;
		box-sizing: border-box;
		padding-left: 2px;
		border-right: 1px solid #bcbcbc;
		display: flex;
		flex-direction: column;
	}
	.tabs {
		height: 15px;
		display: flex;
		padding-left: 1px;
		align-items: flex-end;
		flex: none;
	}
	.tab {
		width: 38px;
		height: 14px;
		box-sizing: border-box;
		padding: 3px 0 0 2px;
		background: #ececec;
		border: 1px solid #d0d0d0;
		border-bottom: 0;
		color: #444;
	}
	.tab.on {
		width: 42px;
		height: 15px;
		background: #fff;
		padding-left: 2px;
		color: #333;
	}
	.tab em {
		font: 9px "Liberation Sans", sans-serif;
		margin-left: 3px;
	}
	.lbox {
		width: 234px;
		flex: none;
		box-sizing: border-box;
		height: 492px;
		border: 1px solid #b4b4b4;
		display: flex;
		flex-direction: column;
	}
	.ltools {
		height: 18px;
		display: flex;
		gap: 1.5px;
		flex: none;
	}
	.ltools .hot {
		display: block;
		background: linear-gradient(90deg, #fff0dc, #ffc27e);
	}
	.thead {
		display: flex;
		flex: none;
		box-sizing: border-box;
		border-top: 1px solid #bbb;
		background: linear-gradient(#fbfbfb, #ececec);
		border-bottom: 1px solid #e4e4e4;
		align-items: stretch;
		color: #333;
	}
	.files {
		height: 20px;
	}
	.ents {
		height: 16px;
	}
	.th {
		box-sizing: border-box;
		border-right: 1px solid #dcdcdc;
		display: flex;
		align-items: center;
	}
	.blue {
		width: 38px;
		padding-left: 2px;
		background: linear-gradient(90deg, #fff, #cfe6f3);
		font-size: 8.4px;
	}
	.ents .blue {
		width: 120px;
	}
	.th.id {
		width: 10px;
		padding-left: 1px;
		border-right: 0;
	}
	.th.sq {
		width: 14px;
		padding-left: 1px;
	}
	.th.sq2 {
		width: 15px;
		padding-left: 1px;
		flex-direction: column;
		justify-content: center;
		border-right: 1px solid #d8d8d8;
	}
	.files .th.id {
		width: 11px;
	}
	.rb {
		display: block;
		width: 10px;
		height: 2px;
		background: linear-gradient(90deg, #d04040, #40c040, #4060e0);
	}
	.th.inf {
		width: 13px;
		justify-content: center;
		background: #f4f4f4;
	}
	.inf i {
		width: 11px;
		height: 11px;
		border-radius: 50%;
		background: radial-gradient(#fff, #bcd);
		text-align: center;
		color: #225;
		font: italic bold 9px/11px "Liberation Serif", serif;
	}
	.ents .th.id {
		width: 11px;
	}
	.ftable {
		height: 42px;
		flex: none;
		background: #fff;
	}
	.frow {
		height: 13px;
		box-sizing: border-box;
		border-bottom: 1px solid #e6f1f8;
		display: flex;
		align-items: center;
		padding-left: 13px;
		font-size: 8.5px;
	}
	.frow b {
		width: 10px;
		text-align: center;
	}
	.frow b:first-of-type {
		margin-left: 3px;
	}
	.sw {
		display: block;
		width: 7px;
		height: 7px;
		border: 1px solid #222;
		flex: none;
	}
	.frow .ic:last-child {
		margin-left: 4px;
	}
	.split {
		height: 8px;
		flex: none;
		box-sizing: border-box;
		background: #f0f0f0;
		border-top: 1px solid #ddd;
		position: relative;
	}
	.split.two {
		height: 4px;
		border-top: 0;
		background: #f4f4f4;
	}
	.tri {
		position: absolute;
		right: 8px;
		top: 0.5px;
		border: 3.5px solid transparent;
		border-top: 3.5px solid #333;
		border-bottom: 0;
	}
	.scombo {
		display: flex;
		gap: 2px;
		height: 15px;
		padding-left: 1px;
		flex: none;
		align-items: stretch;
		margin-bottom: 4px;
	}
	.spin {
		width: 7px;
		display: flex;
		flex-direction: column;
		gap: 1px;
		flex: none;
	}
	.spin s {
		flex: 1;
		background: #eee;
		box-shadow: inset -1px -1px #888, inset 1px 1px #fff;
		position: relative;
	}
	.spin s::after,
	.arrow s::after {
		content: "";
		position: absolute;
		left: 1px;
		top: 2px;
		border: 2.5px solid transparent;
		border-bottom: 3px solid #111;
		border-top: 0;
	}
	.spin s.d::after,
	.arrow s.d::after {
		border-bottom: 0;
		border-top: 3px solid #111;
	}
	.eicons {
		height: 20px;
		flex: none;
		display: flex;
		align-items: center;
		gap: 3px;
	}
	.eicons .ic:nth-child(3) {
		margin-left: -3px;
	}
	.vdots {
		width: 1px;
		height: 16px;
		margin: 0 4px 0 53px;
		background: repeating-linear-gradient(#bbb 0 1px, transparent 1px 3px);
	}
	.eicons .drop {
		margin-left: -2px;
	}
	.tree {
		height: 211px;
		flex: none;
		background: #fff;
	}
	.trow {
		height: 12.5px;
		box-sizing: border-box;
		display: flex;
		align-items: center;
		border-bottom: 1px solid #f0f6fa;
		padding-left: 4px;
		color: #333;
	}
	.pm {
		width: 5px;
		height: 5px;
		border: 1px solid #9aa;
		background: linear-gradient(#fff, #dde);
		margin-right: 2px;
		position: relative;
		flex: none;
	}
	.pm::before {
		content: "";
		position: absolute;
		left: 1px;
		top: 2px;
		width: 3px;
		height: 1px;
		background: #334;
	}
	.pm::after {
		content: "";
		position: absolute;
		left: 2px;
		top: 1px;
		width: 1px;
		height: 3px;
		background: #334;
	}
	.pm.minus::after {
		display: none;
	}
	.pm.gray {
		background: #e4e4e4;
		border-color: #999;
		margin: 0 4px 0 4px;
	}
	.trow .ic {
		margin: 0 5px 0 0;
	}
	.tl.ah {
		margin-left: 1px;
	}
	.child {
		padding-left: 26px;
		position: relative;
	}
	.child::before {
		content: "";
		position: absolute;
		left: 20px;
		top: 0;
		width: 7px;
		height: 7px;
		border-left: 1px dotted #888;
		border-bottom: 1px dotted #888;
	}
	.hl {
		display: flex;
		align-items: center;
		height: 12px;
		width: 145px;
		background: #abcde0;
		flex: none;
	}
	.hl.off {
		background: none;
	}
	.trow .hl .ic {
		margin: 0 3px 0 1px;
	}
	.hl .tl {
		flex: 1;
	}
	.hl b {
		font-weight: 400;
		margin-right: 3px;
		font-size: 8.5px;
	}
	.trow .hl .ic:last-child {
		margin: 0 4px 0 3px;
	}
	.ptable {
		flex: 1;
		display: flex;
		min-height: 0;
	}
	.pmain {
		flex: 1;
		background: #fff;
		overflow: hidden;
		padding-left: 2px;
	}
	.phead {
		display: flex;
		height: 14px;
		box-sizing: border-box;
		background: linear-gradient(#f4f4f4, #e6e6e6);
		border-bottom: 1px solid #aaa;
		align-items: center;
		color: #333;
	}
	.phead span:first-child {
		width: 83px;
		border-right: 1px solid #ccc;
		padding-left: 1px;
		box-sizing: border-box;
	}
	.phead span:last-child {
		padding-left: 2px;
	}
	.psec {
		height: 12.5px;
		box-sizing: border-box;
		display: flex;
		align-items: center;
		background: linear-gradient(90deg, #f0f0f0 13px, #fff 13px);
		border-bottom: 1px solid #ccc;
		font-size: 8.3px;
	}
	.psec b {
		color: #222;
	}
	.prow {
		height: 12.5px;
		box-sizing: border-box;
		display: flex;
		align-items: center;
		padding-left: 26px;
		border-bottom: 1px solid #f0f0f0;
		color: #444;
	}
	.prow > span:first-child {
		width: 58px;
		flex: none;
	}
	.prow span.dim {
		color: #999;
	}
	.cb {
		display: block;
		width: 7px;
		height: 7px;
		border: 1px solid #888;
		background: #eee;
		box-shadow: inset 1px 1px #ccc;
		position: relative;
	}
	.cb.on::after {
		content: "";
		position: absolute;
		left: 1px;
		top: 0;
		width: 3px;
		height: 5px;
		border: solid #2a80b8;
		border-width: 0 1.5px 1.5px 0;
		transform: rotate(40deg);
	}
	.colr {
		display: block;
		width: 8px;
		height: 8px;
		background: #00f;
		border: 1px solid #222;
	}
	.vscroll {
		width: 12px;
		display: flex;
		flex-direction: column;
		background: #e4e4e4;
		flex: none;
	}
	.thumb {
		flex: 1;
		margin: 6px 0 18px;
		background: #cdcdcd;
	}
	.up,
	.dn {
		height: 9px;
		background: #f0f0f0;
		position: relative;
	}
	.up::after,
	.dn::after {
		content: "";
		position: absolute;
		left: 4px;
		top: 3px;
		width: 3px;
		height: 3px;
		border: solid #444;
		border-width: 1px 0 0 1px;
		transform: rotate(45deg);
	}
	.dn::after {
		transform: rotate(225deg);
		top: 1px;
	}

	/* right column */
	.right {
		flex: 1;
		min-width: 0;
		display: flex;
		flex-direction: column;
	}
	.caption {
		height: 16px;
		flex: none;
		position: relative;
		display: flex;
		align-items: center;
		justify-content: center;
		padding-right: 38px;
		font: bold 11px "Liberation Sans", sans-serif;
		letter-spacing: 0;
		color: #111;
	}
	.cap-page {
		position: absolute;
		right: 7px;
	}
	.view {
		display: flex;
		height: 328px;
		flex: none;
	}
	.vtools {
		width: 31px;
		flex: none;
		display: flex;
		flex-direction: column;
		align-items: center;
		padding-top: 1px;
		box-sizing: border-box;
	}
	.hdots {
		display: block;
		width: 16px;
		height: 3px;
		margin: 0 0 2px;
		flex: none;
		background: radial-gradient(circle, #555 0.8px, transparent 1px) 0 0 / 5px 3px repeat-x;
	}
	.vbtn {
		height: 19.5px;
		width: 18px;
		display: flex;
		align-items: center;
		justify-content: center;
		position: relative;
		flex: none;
	}
	.hdots:not(:first-child) {
		margin: 4px 0 3.5px;
	}
	.vbtn.cubeb {
		left: 2px;
		height: 16px;
	}
	.cubeb .drop {
		margin-left: 1px;
	}
	.plot {
		width: 725px;
		height: 328px;
		flex: none;
		position: relative;
		box-sizing: border-box;
		overflow: hidden;
		box-shadow: 0 0 0 1px #35c4c4;
	}
	.canvas {
		display: block;
		width: 725px;
		height: 328px;
	}
	.canvas :global(.ghost) {
		font: 10px "Liberation Sans", sans-serif;
		fill: #2060e0;
		opacity: 0.14;
	}
	.canvas :global(.axis) {
		font: 9px "Liberation Sans", sans-serif;
		fill: #f8d8d8;
	}
	.legend {
		position: absolute;
		left: 3.5px;
		top: 4px;
		font-size: 9.2px;
		line-height: 11.1px;
		letter-spacing: 0;
		color: #e2dcdc;
		white-space: nowrap;
	}
	.scale {
		display: flex;
		margin-top: -4.3px;
	}
	.bars {
		width: 7.5px;
		padding-top: 7px;
		flex: none;
	}
	.bars i {
		display: block;
		height: 13.95px;
	}
	.labels {
		margin-left: -7.5px;
	}
	.labels div {
		display: flex;
		align-items: center;
		height: 13.95px;
	}
	.labels i {
		display: block;
		width: 14px;
		height: 1px;
		background: #c4c4c4;
		flex: none;
	}
	.nores {
		display: flex;
		align-items: center;
		margin-top: -1.5px;
		color: #b89a9a;
		height: 11px;
	}
	.nores i {
		display: block;
		width: 7px;
		height: 7px;
		background: #c8c8c8;
		margin-right: 8px;
	}
	.frame-info {
		position: absolute;
		right: 9px;
		top: 3.5px;
		font-size: 9.2px;
		line-height: 13px;
		letter-spacing: 0;
		color: #e8e8ee;
		text-align: right;
	}

	.btools {
		height: 48px;
		flex: none;
		padding: 2px 0 0 3px;
		box-sizing: border-box;
		border-bottom: 1px solid #c4c4c4;
	}
	.btools .row {
		height: 19px;
	}
	.btools .r2 {
		margin-top: 0;
		height: 21px;
	}
	.r2 .btn .ic {
		width: 15px;
		height: 15px;
		margin-top: 1.5px;
	}
	.combo.comp {
		width: 49px;
		height: 15px;
		flex: none;
		margin: 0 1px 0 -2.5px;
	}
	.combo.comp span {
		padding-left: 2px;
	}
	.slider {
		width: 118px;
		margin: 0 0 0 -1px;
		flex: none;
	}
	.tr {
		position: relative;
		height: 8px;
		background: #cdcdcd;
		box-shadow: inset 1px 1px #aaa;
	}
	.tr.b {
		height: 3px;
		margin-top: 1.5px;
	}
	.tr i {
		position: absolute;
		top: 0;
		bottom: 0;
		right: 10px;
		width: 10px;
		background: #f2f2f2;
		border: solid #999;
		border-width: 0 1px 1px 1px;
		box-sizing: border-box;
	}
	.tr i:last-child {
		right: 1px;
	}

	/* bottom panel */
	.panel {
		height: 114px;
		flex: none;
		display: flex;
		border-bottom: 1px solid #bbb;
		box-sizing: border-box;
		color: #333;
		padding-left: 3px;
	}
	.col {
		padding-top: 6px;
		box-sizing: border-box;
		flex: none;
		display: flex;
		flex-direction: column;
		align-items: flex-start;
	}
	.lbl {
		height: 12px;
		line-height: 12px;
		flex: none;
	}
	.combo {
		height: 14px;
		display: flex;
		background: #fff;
		border: 1px solid;
		border-color: #555 #ddd #ddd #555;
		box-sizing: border-box;
		flex: none;
		color: #222;
	}
	.combo span {
		flex: 1;
		padding-left: 1px;
		line-height: 12px;
		white-space: nowrap;
		overflow: hidden;
	}
	.combo b {
		width: 11px;
		flex: none;
		background: #eee;
		box-shadow: inset -1px -1px #888;
		position: relative;
	}
	.combo b::after {
		content: "";
		position: absolute;
		left: 3px;
		top: 5px;
		border: 2.5px solid transparent;
		border-top: 3px solid #111;
		border-bottom: 0;
	}
	.combo b.flat,
	.combo.wide b {
		background: #fff;
		box-shadow: none;
	}
	.combo.wide {
		flex: 1;
		height: 15px;
		border: 1px solid #e6e6e6;
		color: #444;
	}
	.combo.wide span {
		padding-left: 2px;
	}
	.combo.off {
		background: #eee;
		color: #888;
	}
	.combo.off b {
		box-shadow: inset -1px -1px #ccc;
	}
	.combo.off b::after {
		border-top-color: #888;
	}
	.c1 {
		width: 145px;
	}
	.c1 .lbl {
		width: 138px;
		position: relative;
	}
	.dots {
		position: absolute;
		right: 0;
		top: 2px;
		width: 11px;
		height: 8px;
		line-height: 6px;
		text-align: center;
		box-shadow: 1px 1px #999;
		background: #eee;
	}
	.c1 .combo {
		width: 120px;
		margin: 1px 0 4px 4px;
	}
	.lay {
		display: flex;
		align-items: center;
		margin-left: 5px;
		height: 15px;
	}
	.c1 .lay .combo {
		width: 50px;
		margin: 0 3px 0 9px;
	}
	.chk {
		display: flex;
		align-items: center;
		gap: 4px;
		color: #333;
	}
	.chk i {
		display: block;
		width: 7px;
		height: 7px;
		border: 1px solid #777;
		background: #fff;
	}
	.chk.off {
		color: #999;
	}
	.chk.off i {
		background: #e8e8e8;
		border-color: #bbb;
	}
	.c1 .chk {
		margin: 7px 0 0 5px;
	}
	.c2 {
		width: 120px;
	}
	.selrow {
		display: flex;
		height: 15px;
		margin: 0 0 0 4px;
		gap: 1px;
	}
	.bev {
		display: block;
		box-sizing: border-box;
		background: #efefef;
		border: 1px solid;
		border-color: #fff #777 #777 #fff;
		text-align: center;
		height: 15px;
		line-height: 13px;
		color: #222;
		flex: none;
	}
	.bev.dis {
		color: #999;
	}
	.bev.arrow {
		width: 15px;
		position: relative;
	}
	.arrow s {
		position: absolute;
		left: 3px;
		top: 2px;
	}
	.ybtn {
		width: 74px;
		background: #e8e85a;
		text-align: center;
		line-height: 13px;
		box-sizing: border-box;
		border: 1px solid #8a8a3a;
		color: #333;
	}
	.ybtn.act {
		box-shadow: inset 0 0 0 1px #24d8e0;
	}
	.bev.sk {
		width: 15px;
		font-weight: 700;
		line-height: 12px;
	}
	.res {
		margin-top: 7px;
	}
	.c2 .combo {
		width: 105px;
		margin: 1px 0 0 6px;
	}
	.selrow.sys {
		margin: 5px 0 0 6px;
	}
	.sys .ybtn {
		width: 91px;
		color: #888;
	}
	.c2 .chk {
		margin: 4px 0 0 7px;
	}
	.c3 {
		width: 101px;
	}
	.c3 .combo {
		width: 89px;
		height: 15px;
		margin-left: 5px;
	}
	.var {
		display: flex;
		align-items: center;
		height: 14px;
		margin: 4px 0 0 4px;
		color: #555;
	}
	.var .chk {
		width: 52px;
		white-space: nowrap;
	}
	.inp {
		display: block;
		height: 15px;
		width: 38px;
		box-sizing: border-box;
		border: 1px solid;
		border-color: #666 #ddd #ddd #666;
		background: #efefef;
		flex: none;
	}
	.inp.num {
		width: 21px;
		height: 14px;
		margin-right: 5px;
		text-align: right;
		padding-right: 2px;
		line-height: 12px;
		color: #777;
	}
	.opt {
		width: 76px;
		margin: 6px 0 0 18px;
		color: #888;
		white-space: nowrap;
	}
	.env {
		margin-top: 3px;
	}
	.c3 .combo:last-child {
		margin-top: 2px;
		height: 14px;
	}
	.c4 {
		width: 63px;
		border-right: 1px solid #c4c4c4;
		height: 108px;
	}
	.c4 .combo {
		width: 43px;
		margin: 2px 0 4px 2px;
	}
	.c4 .inp {
		margin: 0 0 1px 2px;
	}
	.c4 .bev {
		width: 53px;
		margin-left: 2px;
		height: 16px;
		line-height: 14px;
	}
	.c4 .act1 {
		margin-top: 7px;
	}
	.c5 {
		padding: 6px 0 0 4px;
	}
	.tabs2 {
		display: flex;
		align-items: flex-end;
		height: 14px;
	}
	.tabs2 span {
		display: block;
		height: 12px;
		box-sizing: border-box;
		width: 29px;
		text-align: center;
		border: 1px solid #c8c8c8;
		border-bottom: 0;
		line-height: 11px;
		color: #333;
	}
	.tabs2 span.on {
		height: 14px;
		background: #fff;
	}
	.tbox {
		width: 111px;
		height: 90px;
		box-sizing: border-box;
		border: 1px solid #c8c8c8;
		padding: 4px 0 0 4px;
		display: flex;
		flex-direction: column;
		gap: 2px;
		align-items: flex-start;
	}
	.tbox .chk {
		margin: 0 0 2px 2px;
		height: 9px;
	}
	.tbox .bev {
		width: 75px;
		height: 12px;
		line-height: 10px;
	}

	.status {
		height: 19px;
		flex: none;
		padding: 6px 0 0 3px;
		box-sizing: border-box;
		color: #333;
		font-size: 8px;
	}
	.taskbar {
		height: 5px;
		flex: none;
		position: relative;
		background: linear-gradient(90deg, #6e3a36 0, #7a4a48 32%, #5e2a26 33%, #6a332c 70%, #8a4a3c 85%, #6e2e28 100%);
	}
	.taskbar i {
		position: absolute;
		top: 1px;
		height: 4px;
		display: block;
	}
</style>
